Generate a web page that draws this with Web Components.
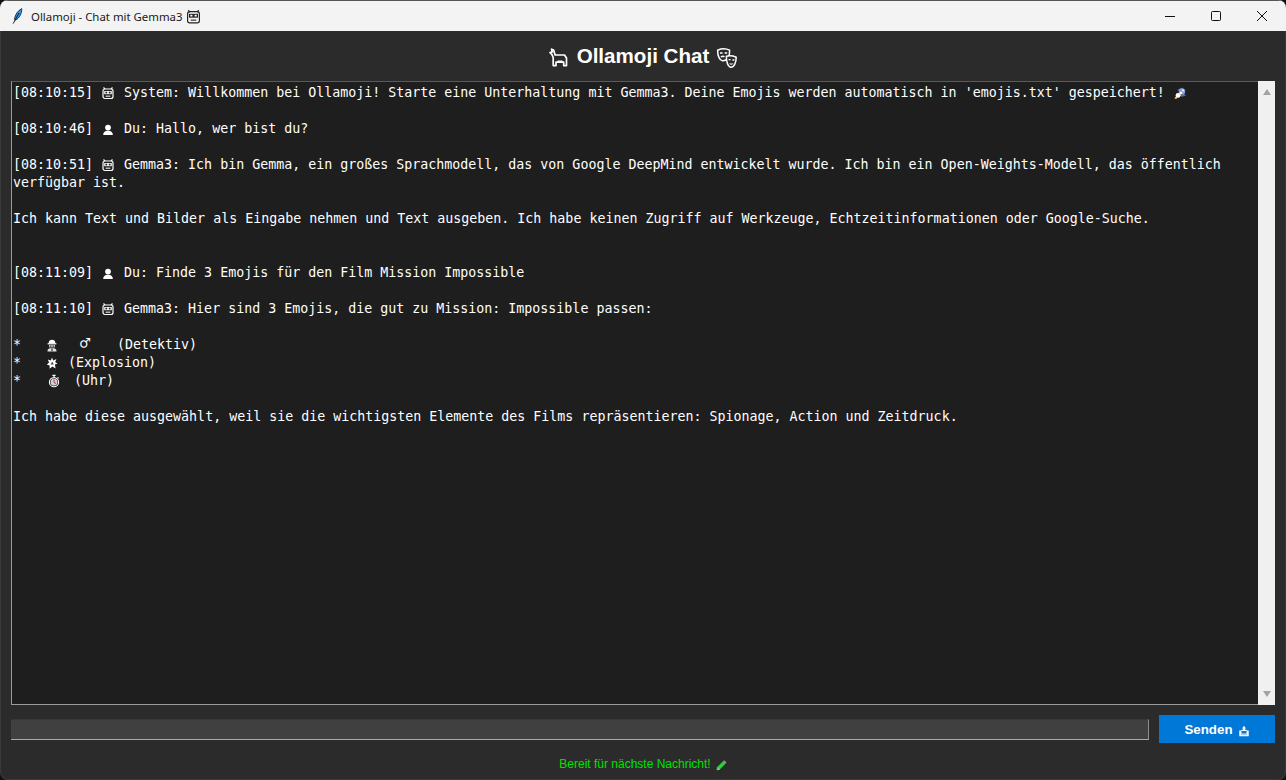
<!DOCTYPE html>
<html lang="de">
<head>
<meta charset="utf-8">
<title>Ollamoji</title>
<style>
  html, body { margin: 0; height: 100%; background: #111; overflow: hidden; }
</style>
</head>
<body>
<ollamoji-window>
  <title-bar slot="title">Ollamoji - Chat mit Gemma3</title-bar>
  <chat-header>
    <emoji-icon slot="left" name="llama" size="22"></emoji-icon>
    Ollamoji Chat
    <emoji-icon slot="right" name="masks" size="22"></emoji-icon>
  </chat-header>
  <chat-log>
    <chat-line gap="1">[08:10:15] <emoji-icon name="robot"></emoji-icon> System: Willkommen bei Ollamoji! Starte eine Unterhaltung mit Gemma3. Deine Emojis werden automatisch in 'emojis.txt' gespeichert! <emoji-icon name="comet"></emoji-icon></chat-line>
    <chat-line gap="1">[08:10:46] <emoji-icon name="user"></emoji-icon> Du: Hallo, wer bist du?</chat-line>
    <chat-line gap="1">[08:10:51] <emoji-icon name="robot"></emoji-icon> Gemma3: Ich bin Gemma, ein großes Sprachmodell, das von Google DeepMind entwickelt wurde. Ich bin ein Open-Weights-Modell, das öffentlich verfügbar ist.</chat-line>
    <chat-line gap="2">Ich kann Text und Bilder als Eingabe nehmen und Text ausgeben. Ich habe keinen Zugriff auf Werkzeuge, Echtzeitinformationen oder Google-Suche.</chat-line>
    <chat-line gap="1">[08:11:09] <emoji-icon name="user"></emoji-icon> Du: Finde 3 Emojis für den Film Mission Impossible</chat-line>
    <chat-line gap="1">[08:11:10] <emoji-icon name="robot"></emoji-icon> Gemma3: Hier sind 3 Emojis, die gut zu Mission: Impossible passen:</chat-line>
    <chat-line>*   <emoji-icon name="detective"></emoji-icon>  <span style="display:inline-block;width:13px;margin-left:4px;font-size:17px;line-height:0">♂</span>   (Detektiv)</chat-line>
    <chat-line>*   <emoji-icon name="boom"></emoji-icon> (Explosion)</chat-line>
    <chat-line gap="1">*   <emoji-icon name="watch" size="21"></emoji-icon> (Uhr)</chat-line>
    <chat-line>Ich habe diese ausgewählt, weil sie die wichtigsten Elemente des Films repräsentieren: Spionage, Action und Zeitdruck.</chat-line>
  </chat-log>
  <input-row>
    <send-button>Senden</send-button>
  </input-row>
  <status-line>Bereit für nächste Nachricht!</status-line>
</ollamoji-window>

<script>
const ICONS = {
  feather: `<path d="M11.8 .6C8 2.5 5 6.5 4.4 11.6l1.3.5C9.4 10 11.8 6 11.8 .6Z" fill="#2f8fe0" stroke="#123" stroke-width=".8"/><path d="M9 5 3.2 15.6" stroke="#123" fill="none"/>`,
  robot: `<g fill="none" stroke="#fff" stroke-width="1.2"><path d="M4 3 2.5 1.5M10 3l1.5-1.5"/><rect x="2" y="3" width="10" height="9.5" rx="2"/></g><rect x="3.2" y="5" width="7.6" height="3.2" fill="#fff"/><rect x="4.4" y="5.7" width="1.8" height="1.7" fill="#222"/><rect x="7.8" y="5.7" width="1.8" height="1.7" fill="#222"/><rect x="4.6" y="9.6" width="4.8" height="1.2" fill="#ddd"/>`,
  robotDark: `<g fill="none" stroke="#222" stroke-width="1.1"><path d="M3.6 3 2.2 1M10.4 3l1.4-2"/><rect x="1.5" y="2.5" width="11" height="10.5" rx="2"/></g><rect x="2.8" y="4.5" width="8.4" height="3.6" fill="#222"/><rect x="4" y="5.4" width="2" height="1.6" fill="#fff"/><rect x="8" y="5.4" width="2" height="1.6" fill="#fff"/><rect x="4.4" y="9.8" width="5.2" height="1.2" fill="#444"/>`,
  user: `<circle cx="7" cy="5.6" r="2.9" fill="#fff"/><path d="M2.2 13c0-3 2.2-4.2 4.8-4.2s4.8 1.2 4.8 4.2Z" fill="#fff"/>`,
  comet: `<path d="M1 13 6 6 9 9.5Z" fill="#e89a30"/><path d="M4 4 9.5 1.5 8 6ZM8 11l5-1.5L10 7Z" fill="#4a70d0"/><circle cx="9" cy="5.4" r="3.2" fill="#8d9fd0"/><circle cx="5" cy="9.4" r="2.4" fill="#fff"/><circle cx="8" cy="7" r="1.2" fill="#fff"/><circle cx="10" cy="4.4" r="1.1" fill="#e4e9f7"/><circle cx="3" cy="12" r=".9" fill="#ffd37a"/>`,
  detective: `<path d="M3.5 5.5C4 2.5 5 1.8 7 1.8s3 .7 3.5 3.7Z" fill="#fff"/><rect x="2.6" y="5.2" width="8.8" height="1.2" fill="#fff"/><rect x="4" y="7" width="6" height="2.4" fill="#bbb"/><rect x="5" y="7.6" width="1.3" height="1" fill="#222"/><rect x="7.7" y="7.6" width="1.3" height="1" fill="#222"/><path d="M2.4 13.4c0-2.6 1.8-3.4 4.6-3.4s4.6.8 4.6 3.4Z" fill="#e4e4e4"/><rect x="6.4" y="10.2" width="1.2" height="3" fill="#333"/>`,
  boom: `<path d="M7 1.6 8.2 4.4 11.4 3 10.2 6.2 12.6 7.6 9.9 8.6 10.6 12.4 7.4 10.4 4.6 12.8 4.6 9.4 1.8 8.6 4.1 6.6 2.8 3.4 5.8 4.4Z" fill="#fff"/><path d="M7.2 5.4 8.8 8.6H5.6Z" fill="#444"/>`,
  watch: `<g fill="none" stroke="#fff" stroke-width="1.1"><circle cx="9" cy="8.2" r="4.6"/><path d="M7.4 1.4h3.2M9 1.4v2.2M12.6 3.4l1 1"/></g><circle cx="9" cy="8.2" r="3.4" fill="#cfd3d8"/><path d="M9 5.6v2.8l2 1.1" fill="none" stroke="#c33" stroke-width="1"/>`,
  llama: `<path d="M3.8 7.4 2 5.6l2.2-.6L3.6 2.2l2 .8 1.5 5H16.5l2 3v7.6h-2.8v-3.4H8v3.4H5.2V10.5Z" fill="none" stroke="#fff" stroke-width="1.7" stroke-linejoin="round"/><path d="M9.5 14.5h5" stroke="#fff" stroke-width="2"/>`,
  masks: `<g fill="none" stroke="#fff" stroke-width="1.5"><path d="M1.6 3.2c4-1.8 8.4-1.8 12 0 0 4.2-.6 7-2.2 8.6-1.2 1.2-3.4 2.2-5 2-2.6-.4-4.8-4.4-4.8-10.6Z"/><path d="M10.4 9.2c3.2-.6 6.6-.4 9.8 1 0 5-2 10.2-5.2 10-3-.2-4.8-5.4-4.6-11Z" fill="#2b2b2b"/></g><path d="M4 6h2.6M8.6 6h2.6M4.8 10c1.6-1 3-.8 3.6 0M12.6 12.6h2M16.4 13h2" stroke="#fff" stroke-width="1.4" fill="none"/><path d="M13 16.4c1.4 1.6 3.2 1.6 4.6.2Z" fill="#fff"/>`,
  outbox: `<path d="M1.5 6.5h2.5v-1h6v1h2.5v6.5h-11Z" fill="#fff"/><rect x="4" y="7" width="6" height="3" fill="#1f6fc0"/><path d="M7 1 4.6 4.2h1.4V7h2V4.2h1.4Z" fill="#fff"/><rect x="3" y="10.6" width="8" height="1.4" fill="#9ccbf5"/>`,
  pen: `<path d="M2.4 9.6 9.4 2.6l2.8 2.8-7 7-3.6.8Z" fill="#27d43d"/><path d="M9.4 2.6l1.2-1.2 2.8 2.8-1.2 1.2Z" fill="#9a9a9a"/><path d="M3 13l.7-2.6 1.9 1.9Z" fill="#bdbdbd"/>`
};

class EmojiIcon extends HTMLElement {
  connectedCallback() {
    const name = this.getAttribute("name");
    const big = name === "llama" || name === "masks";
    const size = Number(this.getAttribute("size")) || 15;
    const root = this.attachShadow({ mode: "open" });
    // no whitespace in here, the line around it is pre-wrap
    root.innerHTML = `<style>:host { display: inline-block; width: ${size}px; height: ${big ? size : 14}px; vertical-align: -3px; line-height: 0; white-space: normal; } svg { display: block; width: ${size}px; height: ${big ? size : 14}px; }</style><svg viewBox="0 0 ${big ? 22 : size} ${big ? 22 : 14}">${ICONS[name]}</svg>`;
  }
}

class OllamojiWindow extends HTMLElement {
  constructor() {
    super();
    this.attachShadow({ mode: "open" }).innerHTML = `
      <style>
        :host { display: flex; flex-direction: column; height: 780px; box-sizing: border-box;
          background: #2b2b2b; border-radius: 8px; overflow: hidden;
          box-shadow: inset 0 0 0 1px #3a3a3a; }
      </style>
      <slot name="title"></slot>
      <slot></slot>`;
  }
}

class TitleBar extends HTMLElement {
  constructor() {
    super();
    this.attachShadow({ mode: "open" }).innerHTML = `
      <style>
        :host { display: flex; align-items: center; height: 31px; box-sizing: border-box; flex: none;
          background: #f3f3f3; color: #1a1a1a; border-top: 1px solid #555;
          font: 11.4px "Noto Sans", sans-serif; padding: 0 1px 0 10px; }
        .feather { width: 14px; height: 16px; margin-right: 7px; }
        .robot { width: 15px; height: 15px; margin-left: 4px; }
        .controls { margin-left: auto; display: flex; align-self: flex-start; }
        .controls span { width: 46px; height: 29px; display: flex; align-items: center; justify-content: center; }
        .controls svg { width: 10px; height: 10px; }
      </style>
      <svg class="feather" viewBox="0 0 14 16">${ICONS.feather}</svg>
      <slot></slot>
      <svg class="robot" viewBox="0 0 14 14">${ICONS.robotDark}</svg>
      <div class="controls">
        <span><svg viewBox="0 0 10 10"><path d="M0 5.5h10" stroke="#111"/></svg></span>
        <span><svg viewBox="0 0 10 10"><rect x=".5" y=".5" width="9" height="9" rx="1" fill="none" stroke="#111"/></svg></span>
        <span><svg viewBox="0 0 10 10"><path d="M0 0l10 10M10 0 0 10" stroke="#111" fill="none"/></svg></span>
      </div>`;
  }
}

class ChatHeader extends HTMLElement {
  constructor() {
    super();
    this.attachShadow({ mode: "open" }).innerHTML = `
      <style>
        :host { display: flex; align-items: center; justify-content: center; gap: 7px; height: 50px; flex: none;
          color: #fff; font: bold 20.6px "Liberation Sans", Arial, sans-serif; }
        ::slotted(emoji-icon) { margin-top: 3px; }
      </style>
      <slot name="left"></slot><span><slot></slot></span><slot name="right"></slot>`;
  }
}

class ChatLog extends HTMLElement {
  constructor() {
    super();
    this.attachShadow({ mode: "open" }).innerHTML = `
      <style>
        :host { display: flex; height: 624px; flex: none; margin: 0 11px; box-sizing: border-box;
          background: #1e1e1e; border: 1px solid #9b9b9b; border-top-color: #5a5a5a; border-right: 0; }
        .text { flex: 1; min-width: 0; padding: 2px 2px 0 1px; color: #fff;
          font: 13.3px/18px "DejaVu Sans Mono", monospace; }
        .bar { width: 17px; flex: none; background: #f0f0f0; display: flex; flex-direction: column;
          justify-content: space-between; align-items: center; padding: 8px 0; box-sizing: border-box; margin-top: -1px; margin-bottom: -1px; }
        .bar i { width: 0; height: 0; border-left: 4.5px solid transparent; border-right: 4.5px solid transparent; }
        .up { border-bottom: 6px solid #a3a3a3; }
        .down { border-top: 6px solid #a3a3a3; }
      </style>
      <div class="text"><slot></slot></div>
      <div class="bar"><i class="up"></i><i class="down"></i></div>`;
  }
}

class ChatLine extends HTMLElement {
  constructor() {
    super();
    this.attachShadow({ mode: "open" }).innerHTML = `<style>:host { display: block; white-space: pre-wrap; }</style><slot></slot>`;
  }
  connectedCallback() {
    this.style.marginBottom = (Number(this.getAttribute("gap")) || 0) * 18 + "px";
  }
}

class InputRow extends HTMLElement {
  constructor() {
    super();
    this.attachShadow({ mode: "open" }).innerHTML = `
      <style>
        :host { display: flex; align-items: center; gap: 10px; flex: none; margin: 10px 11px 0; }
        .field { flex: 1; height: 21px; box-sizing: border-box; background: #404040;
          border-top: 1px dotted #2f2f2f; border-bottom: 1px solid #aaa; border-right: 1px solid #8f8f8f; }
      </style>
      <div class="field"></div>
      <slot></slot>`;
  }
}

class SendButton extends HTMLElement {
  constructor() {
    super();
    this.attachShadow({ mode: "open" }).innerHTML = `
      <style>
        :host { display: flex; align-items: center; justify-content: center; gap: 5px; width: 116px; height: 28px;
          background: #0078d7; color: #fff; font: bold 13.33px "Liberation Sans", Arial, sans-serif; cursor: pointer; }
        svg { width: 12px; height: 12px; margin-top: 3px; }
      </style>
      <slot></slot>
      <svg viewBox="0 0 14 14">${ICONS.outbox}</svg>`;
  }
}

class StatusLine extends HTMLElement {
  constructor() {
    super();
    this.attachShadow({ mode: "open" }).innerHTML = `
      <style>
        :host { display: flex; align-items: center; justify-content: center; gap: 4px; flex: 1; padding-top: 5px;
          color: #00e000; font: 12px "Liberation Sans", Arial, sans-serif; }
        svg { width: 12px; height: 12px; margin-top: 2px; }
      </style>
      <slot></slot>
      <svg viewBox="0 0 14 14">${ICONS.pen}</svg>`;
  }
}

customElements.define("emoji-icon", EmojiIcon);
customElements.define("ollamoji-window", OllamojiWindow);
customElements.define("title-bar", TitleBar);
customElements.define("chat-header", ChatHeader);
customElements.define("chat-log", ChatLog);
customElements.define("chat-line", ChatLine);
customElements.define("input-row", InputRow);
customElements.define("send-button", SendButton);
customElements.define("status-line", StatusLine);
</script>
</body>
</html>
